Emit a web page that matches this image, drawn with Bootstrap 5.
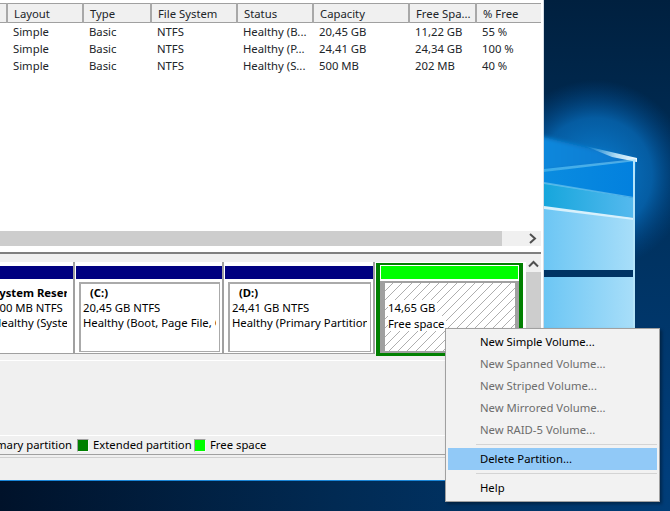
<!DOCTYPE html>
<html lang="en">
<head>
<meta charset="utf-8">
<title>Disk Management</title>
<link href="https://cdn.jsdelivr.net/npm/bootstrap@5.3.0/dist/css/bootstrap.min.css" rel="stylesheet">
<style>
html,body{margin:0;width:670px;height:511px;overflow:hidden;background:#00264e}
body{font-family:"Noto Sans","Open Sans",sans-serif;font-size:11.3px;line-height:15px;color:#000}
.desk{position:relative;width:670px;height:511px;overflow:hidden}
.wall{position:absolute;left:0;top:0}
.win{position:relative;width:544px;height:481px;background:#f0f0f0;border-bottom:1px solid #1a86d8;border-right:1px solid #d4dde6;box-shadow:inset -2px 0 0 #fff}
.upper{width:541px;background:#fff;padding-top:3px;height:250px}
.vols{width:541px;table-layout:fixed;margin:0;border-top:1px solid #a0a0a0;--bs-table-bg:transparent;font-size:11.3px}
.vols th{height:19px;padding:0 0 0 6px;font-weight:400;background:#f0f0f0;border-bottom:1px solid #a0a0a0;border-right:2px solid #a8a8a8;white-space:nowrap;overflow:hidden;line-height:17px}
.vols th:last-child{border-right:0}
.vols td{height:17px;padding:0 0 0 6px;border:0;white-space:nowrap;line-height:17px}
.tablebox{height:228px;overflow:hidden}
.hbar{height:15px;background:#f0f0f0}
.hthumb{width:502px;background:#cdcdcd}
.hbar svg{margin-left:25px}
.splitline{width:541px;height:4px;background:#fff;border-bottom:2px solid #808080}
.gap1{width:541px;height:8px;background:#f0f0f0}
.mid{width:541px;height:92px;background:#fff}
.parts{width:523px;height:92px}
.pcell{height:92px;padding-top:4px;border-right:2px solid #a0a0a0;border-bottom:1px solid #a0a0a0}
.p1{width:75px}.p2{width:149px;padding-left:1px}.p3{width:151px;padding-left:1px}
.pcap{height:13px;background:#000080}
.pbody{height:70px;margin:3px 2px 0 3px;border:1px solid #aaa;border-top-width:2px;border-left-width:2px;padding:0 3px 0 2px;white-space:nowrap}
.p1 .pbody{margin:3px 6px 0 0;border:0;padding:2px 0 0 0}
.ptxt{overflow:hidden;height:60px}
.clip1{margin-left:-7px}
.drv{padding-left:7px;font-weight:700;height:15px;display:block;margin-top:1px}
.p1 .drv{padding-left:0}
.pfree{width:147px;height:93px;margin:1px 0 0 1px;border:4px solid #008000;border-top-width:2px;border-bottom-width:3px;background:#fff;padding:1px 1px 0}
.freecap{height:13px;background:#00ff00}
.freebody{height:72px;margin:2px -1px 0;background:#a0a0a0;padding:2px 4px 2px 5px}
.hatch{height:68px;padding:17px 0 0 3px;white-space:nowrap;background:repeating-linear-gradient(-45deg,#fff 0,#fff 5.7px,#aeaeae 5.7px,#aeaeae 6.4px)}
.hatch span{display:table;height:15.5px;background:#fff;padding-right:2px}
.vbar{width:15px;margin:-8px 0 0 3px;background:#f0f0f0;height:100px}
.vthumb{height:82px;background:#cdcdcd}
.lower{width:541px;height:76px;border-bottom:1px solid #fff;border-top:1px solid #fff;margin-top:6px}
.legend{width:541px;height:19px;align-items:center;border-bottom:1px solid #a0a0a0;line-height:18px}
.legclip{width:72px;white-space:nowrap;justify-content:flex-end;overflow:hidden}
.legext{width:96px;white-space:nowrap}
.sw{width:12px;height:13px;border:1px solid #a0a0a0;border-right-color:#f8f8f8;border-bottom-color:#f8f8f8;margin:0 4px 0 5px}
.sw-ext{background:#008000}.sw-free{background:#00ff00}
.legfoot{width:541px;border-top:1px solid #d0d0d0;margin-top:2px}
.ctx.dropdown-menu{position:absolute;left:445px;top:328px;display:block;width:215px;height:174px;min-width:0;padding:2px;margin:0;border:1px solid #a0a0a0;border-radius:0;background:#f2f2f2;font-size:11.3px;color:#000;box-shadow:2px 2px 3px rgba(0,0,0,.35)}
.ctx li{list-style:none}
.ctx .dropdown-item{height:22px;padding:0 0 0 32px;line-height:22px;color:#000;font-size:11.3px}
.ctx .dropdown-item.disabled{color:#6d6d6d}
.ctx .dropdown-item.hot{background:#91c9f7}
.ctx .dropdown-divider{margin:3px 0 3px 28px;border-top:1px solid #d4d4d4;opacity:1}
</style>
</head>
<body>
<div class="desk">
<svg class="wall" width="670" height="511" viewBox="0 0 670 511">
<defs>
<linearGradient id="bg" x1="0" y1="0" x2="1" y2="0"><stop offset="0" stop-color="#00122a"/><stop offset=".5" stop-color="#012a53"/><stop offset="1" stop-color="#003d78"/></linearGradient>
<linearGradient id="sky" x1="0" y1="0" x2="0" y2="1"><stop offset="0" stop-color="#00203f"/><stop offset=".4" stop-color="#00305c"/><stop offset="1" stop-color="#004080"/></linearGradient>
<radialGradient id="glow" gradientUnits="userSpaceOnUse" cx="595" cy="175" r="95"><stop offset="0" stop-color="#0a80d4"/><stop offset=".6" stop-color="#0665b0" stop-opacity=".85"/><stop offset="1" stop-color="#004a90" stop-opacity="0"/></radialGradient>
<linearGradient id="p1" x1="0" y1="0" x2="1" y2="0"><stop offset="0" stop-color="#0a88dc"/><stop offset="1" stop-color="#0a78d0"/></linearGradient>
<linearGradient id="p2" x1="0" y1="0" x2="1" y2="0"><stop offset="0" stop-color="#0a8ce0"/><stop offset="1" stop-color="#0280de"/></linearGradient>
<linearGradient id="p3" x1="0" y1="0" x2="1" y2="0"><stop offset="0" stop-color="#16a6dc"/><stop offset="1" stop-color="#55b9ee"/></linearGradient>
<linearGradient id="p4" x1="0" y1="0" x2="1" y2="0"><stop offset="0" stop-color="#6cc6f4"/><stop offset="1" stop-color="#a8def9"/></linearGradient>
<linearGradient id="rayg" x1="0" y1="0" x2="1" y2="0"><stop offset="0" stop-color="#8fd6f8" stop-opacity="0"/><stop offset=".6" stop-color="#cfeffc" stop-opacity=".85"/><stop offset="1" stop-color="#f2fbff"/></linearGradient>
<linearGradient id="ray2" x1="0" y1="0" x2="1" y2="0"><stop offset="0" stop-color="#3fb4f0" stop-opacity=".85"/><stop offset="1" stop-color="#8ed8f8" stop-opacity=".5"/></linearGradient>
<filter id="soft" x="-10%" y="-50%" width="120%" height="200%"><feGaussianBlur stdDeviation=".7"/></filter>
<filter id="softer" x="-20%" y="-20%" width="140%" height="140%"><feGaussianBlur stdDeviation="2"/></filter>
</defs>
<rect width="670" height="511" fill="url(#sky)"/>
<rect y="480" width="670" height="31" fill="url(#bg)"/>
<rect x="544" y="60" width="126" height="220" fill="url(#glow)"/>
<polygon points="540,136 636,160 540,172" fill="url(#p1)" filter="url(#softer)"/>
<polygon points="544,172 636,160 634,198 544,183" fill="url(#p2)"/>
<polygon points="544,183 634,198 634,218 544,207" fill="url(#p3)"/>
<polygon points="544,207 634,218 634,270 544,270" fill="url(#p4)"/>
<rect x="544" y="277" width="90" height="60" fill="url(#p4)"/>
<polygon points="544,206 634,218 634,220 544,209" fill="#d8f1fc" filter="url(#soft)"/>
<polygon points="544,182 634,197 634,198 544,184" fill="#7fd0f4" opacity=".6"/>
<polygon points="585,146 637,158 637,162 612,157" fill="url(#rayg)" filter="url(#soft)"/>
<polygon points="544,169 636,159 636,161 544,172" fill="url(#ray2)" filter="url(#soft)"/>
<rect x="633" y="160" width="2" height="177" fill="#b4e4fa"/>
</svg>

<div class="win">
  <div class="upper">
    <div class="tablebox">
      <table class="table vols">
        <colgroup><col style="width:7px"><col style="width:76px"><col style="width:68px"><col style="width:86px"><col style="width:76px"><col style="width:96px"><col style="width:67px"><col></colgroup>
        <thead><tr><th></th><th>Layout</th><th>Type</th><th>File System</th><th>Status</th><th>Capacity</th><th>Free Spa...</th><th>% Free</th></tr></thead>
        <tbody>
          <tr><td></td><td>Simple</td><td>Basic</td><td>NTFS</td><td>Healthy (B...</td><td>20,45 GB</td><td>11,22 GB</td><td>55 %</td></tr>
          <tr><td></td><td>Simple</td><td>Basic</td><td>NTFS</td><td>Healthy (P...</td><td>24,41 GB</td><td>24,34 GB</td><td>100 %</td></tr>
          <tr><td></td><td>Simple</td><td>Basic</td><td>NTFS</td><td>Healthy (S...</td><td>500 MB</td><td>202 MB</td><td>40 %</td></tr>
        </tbody>
      </table>
    </div>
    <div class="hbar d-flex">
      <div class="hthumb"></div>
      <svg width="12" height="15" viewBox="0 0 12 15"><path d="M3 3l5 4.5-5 4.5" fill="none" stroke="#505050" stroke-width="2"/></svg>
    </div>
  </div>
  <div class="splitline"></div>
  <div class="gap1"></div>
  <div class="mid d-flex">
    <div class="parts d-flex">
      <div class="pcell p1"><div class="pcap"></div><div class="pbody"><div class="ptxt"><div class="clip1"><span class="drv">System Reser</span>500 MB NTFS<br>Healthy (System</div></div></div></div>
      <div class="pcell p2"><div class="pcap"></div><div class="pbody"><div class="ptxt"><span class="drv">(C:)</span>20,45 GB NTFS<br>Healthy (Boot, Page File, C</div></div></div>
      <div class="pcell p3"><div class="pcap"></div><div class="pbody"><div class="ptxt"><span class="drv">(D:)</span>24,41 GB NTFS<br>Healthy (Primary Partition</div></div></div>
      <div class="pfree"><div class="freecap"></div><div class="freebody"><div class="hatch"><span>14,65 GB</span><span>Free space</span></div></div></div>
    </div>
    <div class="vbar">
      <svg class="d-block" width="15" height="18" viewBox="0 0 15 18"><path d="M3 12.5l4.5-4.5 4.5 4.5" fill="none" stroke="#505050" stroke-width="2"/></svg>
      <div class="vthumb"></div>
    </div>
  </div>
  <div class="lower"></div>
  <div class="legend d-flex">
    <div class="legclip d-flex"><span>Primary partition</span></div>
    <span class="sw sw-ext"></span><span class="legext">Extended partition</span>
    <span class="sw sw-free"></span><span>Free space</span>
  </div>
  <div class="legfoot"></div>
</div>

<ul class="dropdown-menu ctx show">
  <li><a class="dropdown-item" href="#">New Simple Volume...</a></li>
  <li><a class="dropdown-item disabled" href="#">New Spanned Volume...</a></li>
  <li><a class="dropdown-item disabled" href="#">New Striped Volume...</a></li>
  <li><a class="dropdown-item disabled" href="#">New Mirrored Volume...</a></li>
  <li><a class="dropdown-item disabled" href="#">New RAID-5 Volume...</a></li>
  <li><hr class="dropdown-divider"></li>
  <li><a class="dropdown-item hot" href="#">Delete Partition...</a></li>
  <li><hr class="dropdown-divider"></li>
  <li><a class="dropdown-item" href="#">Help</a></li>
</ul>
</div>
<script src="https://cdn.jsdelivr.net/npm/bootstrap@5.3.0/dist/js/bootstrap.bundle.min.js"></script>
</body>
</html>
